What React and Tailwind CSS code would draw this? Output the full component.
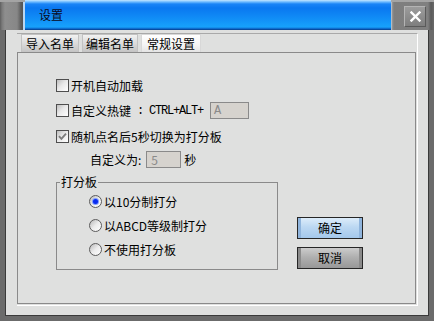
import React from "react";

const cjk = "font-['Noto_Sans_CJK_SC','Noto_Sans_CJK_JP',sans-serif]";

function Check({ checked }) {
  return (
    <span className="w-[13px] h-[13px] border border-[#4e4e4e] bg-[linear-gradient(135deg,#bdbdbd_0%,#e8e8e8_45%,#ffffff_100%)] flex items-center justify-center shrink-0">
      {checked && (
        <svg width="9" height="9" viewBox="0 0 9 9">
          <path d="M1 4.2 L3.4 6.8 L8 1.6" stroke="#7d7d7d" strokeWidth="1.9" fill="none" />
        </svg>
      )}
    </span>
  );
}

function Radio({ on }) {
  return (
    <span className="w-[13px] h-[13px] rounded-full border border-[#5c5c5c] bg-[linear-gradient(135deg,#b8b8b8_0%,#ececec_50%,#ffffff_100%)] flex items-center justify-center shrink-0">
      {on && <span className="w-[5px] h-[5px] rounded-full bg-[#0a2cf0] shadow-[0_0_0_1px_#7f9cff]" />}
    </span>
  );
}

export default function App() {
  return (
    <div className={`w-[434px] h-[321px] bg-[#6b6b6b] flex flex-col overflow-hidden ${cjk} text-[12px] leading-[14px] text-black`}>
      {/* title bar */}
      <div className="h-[30px] flex shrink-0">
        <div className="w-[25px] h-full bg-[linear-gradient(to_right,#5e5e5e_0px,#7a7a7a_2px,#8e8e8e_5px,#878787_17px,#5c5c5c_21px,#545454_23px,#b9d6f2_23px,#b9d6f2_25px)] shadow-[inset_0_2px_0_#a4a4a4]" />
        <div className="flex-1 h-full bg-[linear-gradient(to_bottom,#c4e6ff_0px,#6ab8ff_2px,#1a84f6_4px,#0a78f0_8px,#0f88f5_16px,#17a2fc_27px,#0a5cc0_29px,#063a80_30px)] flex items-center pl-[14px]">
          <span className="text-[12px] text-[#0a0a20]">设置</span>
        </div>
        <div className="w-[43px] h-full bg-[linear-gradient(to_right,#c6dcf2_0px,#9a9a9a_1px,#7e7e7e_3px,#808080_37px,#5a5a5a_40px,#6a6a6a_43px)] shadow-[inset_0_2px_0_#a4a4a4] pl-[13px] pt-[6px]">
          <div className="w-[22px] h-[21px] border border-t-[#b4b4b4] border-l-[#b4b4b4] border-r-[#5a5a5a] border-b-[#5a5a5a] bg-[linear-gradient(to_bottom,#9c9c9c,#7e7e7e)] flex items-center justify-center">
            <svg width="11" height="11" viewBox="0 0 11 11">
              <path d="M1.5 1.5 L9.5 9.5 M9.5 1.5 L1.5 9.5" stroke="#ffffff" strokeWidth="2.4" strokeLinecap="square" />
            </svg>
          </div>
        </div>
      </div>

      {/* body */}
      <div className="flex-1 ml-[5px] mr-[5px] mb-[5px] border-l border-r border-b border-[#3a3a3a] bg-[#dfe0df] flex flex-col">
        <div className="flex-1 ml-[11px] mt-[3px] mr-[10px] mb-[9px] flex flex-col border-t border-t-[#a9a9a9] border-r border-r-white border-b border-b-white pr-[1px] pb-[1px]">
          {/* tabs */}
          <div className="h-[18px] flex pl-[4px] gap-[3px] shrink-0">
            <div className="w-[58px] h-full flex items-center justify-center border-l border-t border-r border-[#c2c2c2] bg-[linear-gradient(to_bottom,#f2f2f2,#d6d6d6_60%,#c4c4c4)]">导入名单</div>
            <div className="w-[56px] h-full flex items-center justify-center border-l border-t border-r border-[#c2c2c2] bg-[linear-gradient(to_bottom,#f2f2f2,#d6d6d6_60%,#c4c4c4)]">编辑名单</div>
            <div className="w-[60px] h-full flex items-center justify-center border-l border-t border-r border-[#d8d8d8] bg-[linear-gradient(to_bottom,#ffffff,#f4f4f4_60%,#e4e4e4)]">常规设置</div>
          </div>
          {/* panel */}
          <div className="flex-1 border border-[#8a8a8a] flex flex-col pl-[38px] pt-[26px]">
            <div className="h-[13px] flex items-center gap-[2px]">
              <Check />
              <span>开机自动加载</span>
            </div>
            <div className="h-[17px] mt-[10px] flex items-center">
              <Check />
              <span className="ml-[2px]">自定义热键</span>
              <span className="font-['Liberation_Mono',monospace] text-[12px] tracking-[-1.2px] whitespace-pre"> : CTRL+ALT+</span>
              <div className="ml-[7px] w-[39px] h-[17px] border border-[#8a8a8a] bg-[#d6d3ce] font-['Liberation_Mono',monospace] text-[12px] text-[#8a8a8a] flex items-center pl-[3px]">A</div>
            </div>
            <div className="h-[13px] mt-[11px] flex items-center gap-[2px]">
              <Check checked />
              <span>随机点名后5秒切换为打分板</span>
            </div>
            <div className="h-[17px] mt-[8px] flex items-center pl-[34px]">
              <span>自定义为:</span>
              <div className="ml-[5px] w-[35px] h-[17px] border border-[#8a8a8a] bg-[#d6d3ce] text-[#8a8a8a] flex items-center pl-[4px]">5</div>
              <span className="ml-[3px]">秒</span>
            </div>
            <div className="flex mt-[14px]">
              <div className="relative w-[222px] h-[88px] border border-[#8a8a8a] pl-[32px] pt-[12px] flex flex-col">
                <span className="absolute left-[3px] top-[-8px] bg-[#dfe0df] px-[1px] leading-[14px]">打分板</span>
                <div className="h-[13px] flex items-center gap-[2px]">
                  <Radio on />
                  <span>以10分制打分</span>
                </div>
                <div className="h-[13px] mt-[11px] flex items-center gap-[2px]">
                  <Radio />
                  <span>以ABCD等级制打分</span>
                </div>
                <div className="h-[13px] mt-[11px] flex items-center gap-[2px]">
                  <Radio />
                  <span>不使用打分板</span>
                </div>
              </div>
              <div className="ml-[19px] mt-[35px] flex flex-col gap-[8px]">
                <div className="w-[66px] h-[22px] border border-[#262626] bg-[linear-gradient(to_bottom,#dcecfa,#bcd8f2_45%,#a4c8ec)] shadow-[inset_3px_0_0_#8fb4dc,inset_-3px_0_0_#8fb4dc] flex items-center justify-center">确定</div>
                <div className="w-[66px] h-[22px] border border-[#262626] bg-[linear-gradient(to_bottom,#cccccc,#b0b0b0_45%,#989898)] shadow-[inset_3px_0_0_#8a8a8a,inset_-3px_0_0_#8a8a8a] flex items-center justify-center">取消</div>
              </div>
            </div>
          </div>
        </div>
      </div>
    </div>
  );
}
